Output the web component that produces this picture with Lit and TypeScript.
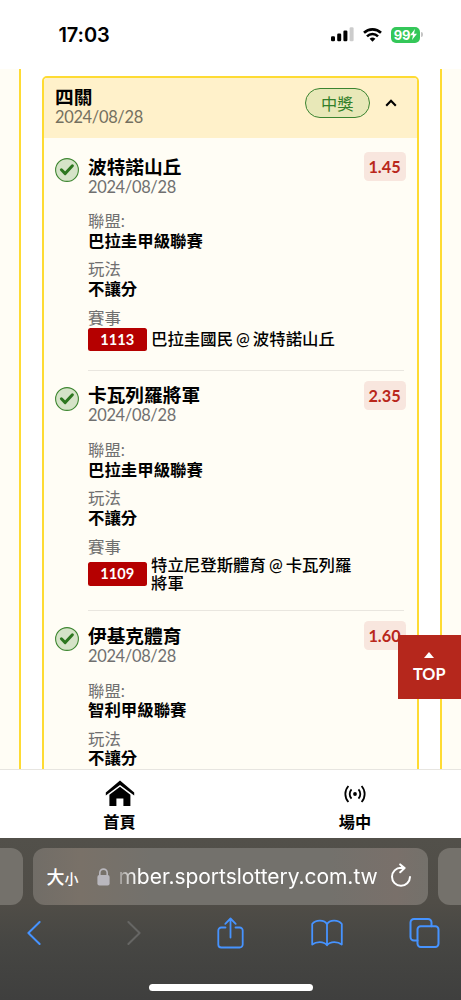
import { LitElement, html, css, svg, nothing } from "lit";
import { customElement, property } from "lit/decorators.js";

interface Pick {
  team: string;
  date: string;
  odds: string;
  league: string;
  market: string;
  code?: string;
  match?: string;
}

const picks: Pick[] = [
  { team: "波特諾山丘", date: "2024/08/28", odds: "1.45", league: "巴拉圭甲級聯賽", market: "不讓分", code: "1113", match: "巴拉圭國民 @ 波特諾山丘" },
  { team: "卡瓦列羅將軍", date: "2024/08/28", odds: "2.35", league: "巴拉圭甲級聯賽", market: "不讓分", code: "1109", match: "特立尼登斯體育 @ 卡瓦列羅將軍" },
  { team: "伊基克體育", date: "2024/08/28", odds: "1.60", league: "智利甲級聯賽", market: "不讓分" },
];

@customElement("status-bar")
export class StatusBar extends LitElement {
  static styles = css`
    :host { display: flex; height: 69px; box-sizing: border-box; padding: 0 38.5px 0 58.5px; align-items: center; justify-content: space-between; background: #fff; font-family: Inter, sans-serif; flex: none; }
    .time { font-size: 20px; font-weight: 600; letter-spacing: -0.1px; line-height: 24px; color: #000; }
    .icons { display: flex; align-items: center; }
    .wifi { margin-left: 9px; }
    .battery { margin-left: 9px; width: 29px; height: 16px; border-radius: 5px; background: #34c759; color: #fff; display: flex; align-items: center; justify-content: center; font-size: 13px; font-weight: 700; letter-spacing: -0.3px; }
    .nub { width: 1.5px; height: 5px; border-radius: 0 2px 2px 0; background: #c4c4c4; margin-left: 1px; }
    svg { display: block; }
  `;
  render() {
    return html`
      <div class="time">17:03</div>
      <div class="icons">
        <svg width="23" height="15" viewBox="0 0 23 15">
          <rect x="0" y="9.3" width="4" height="5" rx="1.2" /><rect x="6.2" y="6.6" width="4" height="7.7" rx="1.2" />
          <rect x="12.4" y="3.5" width="4" height="10.8" rx="1.2" /><rect x="18.6" y="0.2" width="4" height="14.1" rx="1.2" fill="#ccc" />
        </svg>
        <svg class="wifi" width="19" height="14" viewBox="0 0 19 14" fill="none" stroke="#000" stroke-width="2.6">
          <path d="M1 4.8a12.2 12.2 0 0 1 17 0" /><path d="M4 8.3a7.8 7.8 0 0 1 11 0" />
          <path d="M9.5 13.8l-2.9-3a4.2 4.2 0 0 1 5.8 0z" fill="#000" stroke="none" />
        </svg>
        <div class="battery">99<svg width="7" height="11" viewBox="0 0 7 11"><path d="M5 0L0 6.2h3L2 11l5-6.3H4z" fill="#fff" /></svg></div>
        <div class="nub"></div>
      </div>
    `;
  }
}

@customElement("bet-pick")
export class BetPick extends LitElement {
  @property({ attribute: false }) pick!: Pick;
  static styles = css`
    :host { display: flex; padding-left: 10.5px; font-size: 16.42px; line-height: 19.6px; }
    .check { width: 24px; height: 24px; margin: 1.2px 9.5px 0 0; flex: none; display: block; }
    .body { flex: 1; padding-bottom: 18.8px; margin-right: 13px; border-bottom: 1.3px solid #e9e6df; }
    .head { display: flex; justify-content: space-between; }
    .team { font-size: 18.7px; line-height: 20px; font-weight: 700; color: #000; }
    .grey { color: #707070; }
    .date { letter-spacing: -0.31px; }
    .odds { height: 29px; line-height: 30px; width: 42px; margin: -4.3px -1.5px 0 0; border-radius: 4.5px; text-align: center; background: #f8e6de; color: #b9271b; font-size: 16.3px; font-weight: 700; }
    .facts { display: grid; row-gap: 9px; margin-top: 15.2px; }
    .strong { font-weight: 700; color: #000; }
    .match { display: flex; align-items: center; gap: 4.5px; min-height: 24px; font-weight: 500; color: #000; line-height: 17.8px; }
    .code { flex: none; width: 58.5px; height: 23.5px; line-height: 24px; border-radius: 2.5px; background: #b50000; color: #fff; text-align: center; font-size: 14.6px; font-weight: 700; }
    .name { width: 204px; word-spacing: -1.1px; }
  `;
  render() {
    const p = this.pick;
    return html`
      <svg class="check" viewBox="0 0 24 24">
        <circle cx="12" cy="12" r="11.4" fill="#d5e3c8" stroke="#3d8630" stroke-width="1.1" />
        <path d="M6.4 11.8l3.8 3.8 7.2-7.8" fill="none" stroke="#2c761f" stroke-width="3" stroke-linecap="round" stroke-linejoin="round" />
      </svg>
      <div class="body">
        <div class="head">
          <div><div class="team">${p.team}</div><div class="grey date">${p.date}</div></div>
          <div class="odds">${p.odds}</div>
        </div>
        <div class="facts">
          <div><div class="grey">聯盟:</div><div class="strong">${p.league}</div></div>
          <div><div class="grey">玩法</div><div class="strong">${p.market}</div></div>
          ${p.match
            ? html`<div><div class="grey">賽事</div><div class="match"><span class="code">${p.code}</span><span class="name">${p.match}</span></div></div>`
            : nothing}
        </div>
      </div>
    `;
  }
}

@customElement("bet-card")
export class BetCard extends LitElement {
  static styles = css`
    :host { display: block; min-height: 720px; border: 2.4px solid #fedb33; border-radius: 5px; background: #fffdf5; overflow: hidden; }
    .header { display: flex; height: 60px; box-sizing: border-box; padding: 9.4px 20px 0 11px; background: #fff1ca; }
    .title { font-size: 18.7px; line-height: 20px; font-weight: 700; color: #000; }
    .date { font-size: 16.42px; line-height: 19.5px; color: #74705f; letter-spacing: -0.31px; }
    .spacer { flex: 1; }
    .won { width: 62.6px; height: 28px; border: 1.2px solid #3b8430; border-radius: 16px; background: #e8e8b8; color: #33802a; font-size: 16.2px; line-height: 29px; text-align: center; margin-top: 1.3px; }
    .caret { margin: 12px 0 0 15.5px; }
    .list { padding-top: 19px; display: grid; row-gap: 14.3px; }
  `;
  render() {
    return html`
      <div class="header">
        <div><div class="title">四關</div><div class="date">2024/08/28</div></div>
        <div class="spacer"></div>
        <div class="won">中獎</div>
        <svg class="caret" width="12" height="8" viewBox="0 0 12 8"><path d="M1.2 6.8L6 1.8l4.8 5" fill="none" stroke="#000" stroke-width="2.1" /></svg>
      </div>
      <div class="list">${picks.map((p) => html`<bet-pick .pick=${p}></bet-pick>`)}</div>
    `;
  }
}

@customElement("site-nav")
export class SiteNav extends LitElement {
  static styles = css`
    :host { display: grid; grid-template-columns: 239px 1fr; height: 69.5px; box-sizing: border-box; border-top: 1px solid #e7e5e0; background: #fff; flex: none; }
    .item { display: flex; flex-direction: column; align-items: center; font-size: 16.2px; font-weight: 700; line-height: 20px; color: #000; }
    .live { padding-left: 10px; }
    .glyph { height: 42px; display: flex; align-items: center; }
    .glyph svg { display: block; margin-top: 6px; }
  `;
  render() {
    return html`
      <div class="item">
        <div class="glyph"><svg width="30" height="27" viewBox="0 0 30 27"><path d="M.8 12.4v3.2L15 4.9l14.2 10.7v-3.2L15 .4z" /><path d="M15 6.8L4.4 14.8V26h7v-7.6h7V26h7V14.8z" /></svg></div>
        首頁
      </div>
      <div class="item live">
        <div class="glyph"><svg width="24" height="18" viewBox="0 0 24 18" fill="none" stroke="#000" stroke-width="1.8"><circle cx="12" cy="9" r="1.9" fill="#000" stroke="none" /><path d="M8.5 4.3a7 7 0 0 0 0 9.4M15.5 4.3a7 7 0 0 1 0 9.4M5.4 1a12 12 0 0 0 0 16M18.6 1a12 12 0 0 1 0 16" /></svg></div>
        場中
      </div>
    `;
  }
}

@customElement("browser-bar")
export class BrowserBar extends LitElement {
  static styles = css`
    :host { display: flex; flex-direction: column; flex: 1; background: linear-gradient(#52504a 0%, #504d47 40%, #464643 65%, #3f3f3e 100%); font-family: Inter, "Noto Sans CJK TC", sans-serif; }
    .tabs { display: grid; grid-template-columns: 23px 395px 23px; column-gap: 10px; padding-top: 10px; height: 56.5px; }
    .tab { background: #74716b; }
    .prev { border-radius: 0 12px 12px 0; }
    .next { border-radius: 12px 0 0 12px; }
    .address { border-radius: 12px; display: flex; align-items: center; color: #fff; padding-left: 13.5px; background: linear-gradient(90deg, #716d67, #797168 12%, #73716c 30%, #73716c 75%, #79706a 92%, #74716b); }
    .big { font-size: 18px; font-weight: 500; }
    .small { font-size: 14px; font-weight: 500; padding-top: 3px; }
    .lock { margin: 1px 0 0 18px; }
    .url { margin-left: 9px; padding-top: 2px; width: 261px; font-size: 21px; line-height: 28px; letter-spacing: -0.04px; white-space: nowrap; -webkit-mask-image: linear-gradient(90deg, rgba(0, 0, 0, 0.3), #000 18px); mask-image: linear-gradient(90deg, rgba(0, 0, 0, 0.3), #000 18px); }
    .reload { margin: -2px 0 0 10.5px; }
    .tools { display: grid; grid-template-columns: 67px 134px 58px 135px 60px; align-items: center; justify-items: center; height: 57px; color: #4693ff; }
    .off { color: #666664; }
    .home { width: 164px; height: 6.5px; border-radius: 4px; background: #fff; margin: 22.5px auto 0; }
    svg { display: block; fill: none; stroke: currentColor; stroke-width: 2; stroke-linecap: round; stroke-linejoin: round; }
    .lock { fill: #b9b7bd; stroke: none; }
  `;
  private icon(cls: string, w: number, h: number, body: unknown) {
    return html`<svg class=${cls} width=${w} height=${h} viewBox="0 0 ${w} ${h}">${body}</svg>`;
  }
  render() {
    return html`
      <div class="tabs">
        <div class="tab prev"></div>
        <div class="address">
          <span class="big">大</span><span class="small">小</span>
          ${this.icon("lock", 13, 18, svg`<rect x=".4" y="7" width="12.2" height="10.5" rx="2" /><path d="M2.8 8V4.8a3.7 3.7 0 0 1 7.4 0V8" fill="none" stroke="#b9b7bd" stroke-width="1.6" />`)}
          <span class="url">mber.sportslottery.com.tw</span>
          ${this.icon("reload", 22, 25, svg`<path d="M11 4.8A9 9 0 1 0 20 14M10.2 1.4l4.4 3.7-4.4 4.2M11 4.8l3.2.4" />`)}
        </div>
        <div class="tab next"></div>
      </div>
      <div class="tools">
        ${this.icon("", 14, 24, svg`<path d="M12.6 1L1.4 12l11.2 11" />`)}
        ${this.icon("off", 14, 24, svg`<path d="M1.4 1l11.2 11L1.4 23" />`)}
        ${this.icon("", 27, 32, svg`<path d="M8.5 10.5H4.3A3 3 0 0 0 1.3 13.5v14a3 3 0 0 0 3 3h18.4a3 3 0 0 0 3-3v-14a3 3 0 0 0-3-3h-4.2M13.5 20.5V1.6M8.3 6.8l5.2-5.3 5.2 5.3" stroke-width="1.8" />`)}
        ${this.icon("", 32, 28, svg`<path d="M16 5.3C13.5.6 4.8.4 1.2 5v20.5c4-3.2 11.5-3.6 14.8.7 3.3-4.3 10.8-3.9 14.8-.7V5C27.2.4 18.5.6 16 5.3zM16 5.3v20.9" stroke-width="1.8" />`)}
        ${this.icon("", 31, 30, svg`<rect x="8.5" y="8.2" width="21" height="20.8" rx="3.2" /><path d="M8.5 22.5H5a3.5 3.5 0 0 1-3.5-3.5V4.5A3.5 3.5 0 0 1 5 1h14a3.5 3.5 0 0 1 3.5 3.5v3.7" />`)}
      </div>
      <div class="home"></div>
    `;
  }
}

@customElement("app-root")
export class AppRoot extends LitElement {
  static styles = css`
    :host { display: flex; flex-direction: column; position: relative; height: 1000px; width: 461px; overflow: hidden; background: #fff; font-family: Lato, "Noto Sans CJK TC", sans-serif; }
    .page { height: 699.5px; flex: none; overflow: hidden; background: #fffdf5; padding: 0 19px; }
    .panel { min-height: 700px; background: #fff; border: solid #fedb33; border-width: 0 2px; padding: 6.5px 21px 0; }
    .top { position: absolute; right: 0; top: 635px; width: 63.5px; height: 63.5px; background: #b5271c; color: #fff; display: flex; flex-direction: column; align-items: center; justify-content: center; font-size: 16.2px; line-height: 20px; font-weight: 700; }
    .arrow { margin: 2px 0 6px; }
  `;
  render() {
    return html`
      <status-bar></status-bar>
      <div class="page"><div class="panel"><bet-card></bet-card></div></div>
      <site-nav></site-nav>
      <browser-bar></browser-bar>
      <div class="top"><svg class="arrow" width="10" height="6" viewBox="0 0 10 6"><path d="M0 6L5 0l5 6z" fill="#fff" /></svg>TOP</div>
    `;
  }
}
